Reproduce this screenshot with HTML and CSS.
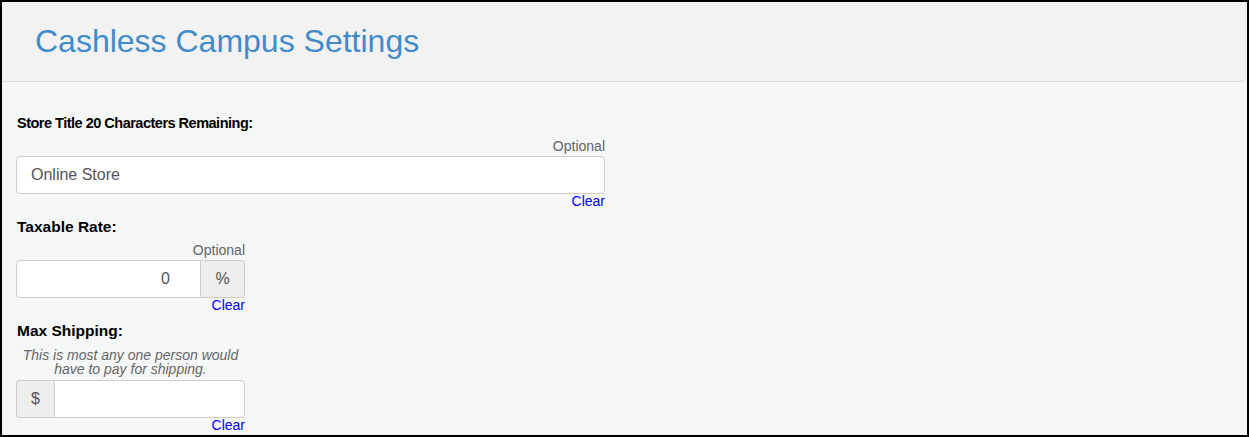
FILE: index.html
```html
<!DOCTYPE html>
<html lang="en">
<head>
<meta charset="UTF-8">
<meta name="viewport" content="width=device-width, initial-scale=1.0">
<title>Cashless Campus Settings</title>
<link rel="stylesheet" href="styles.css">
</head>
<body>

<div class="frame">
    <div class="page-header">
        <h1>Cashless Campus Settings</h1>
    </div>
    <form class="settings" id="settingsForm">
        <div class="form-group wide">
            <label for="storeTitle" class="tight">Store Title 20 Characters Remaining:</label>
            <div class="hint">Optional</div>
            <input type="text" id="storeTitle" name="storeTitle" value="Online Store">
            <a class="clear" href="#">Clear</a>
        </div>
        <div class="form-group narrow">
            <label for="taxRate">Taxable Rate:</label>
            <div class="hint">Optional</div>
            <div class="input-group">
                <input type="text" id="taxRate" name="taxRate" class="num" value="0">
                <span class="addon addon-right">%</span>
            </div>
            <a class="clear" href="#">Clear</a>
        </div>
        <div class="form-group narrow">
            <label for="maxShipping">Max Shipping:</label>
            <div class="help">This is most any one person would have to pay for shipping.</div>
            <div class="input-group">
                <span class="addon addon-left">$</span>
                <input type="text" id="maxShipping" name="maxShipping">
            </div>
            <a class="clear" href="#">Clear</a>
        </div>
    </form>
</div>

</body>
</html>
```

FILE: styles.css
```css
body {
    margin: 0;
    font-family: "Liberation Sans", Arial, sans-serif;
}
.frame {
    height: 437px;
    box-sizing: border-box;
    border: 2px solid #000;
    background-color: #f5f7f6;
    overflow: hidden;
}
.page-header {
    height: 80px;
    box-sizing: border-box;
    margin-right: 1px;
    padding: 19px 0 0 33px;
    background-color: #f2f2f2;
    border-bottom: 1px solid #dcdcdc;
    border-right: 1px solid #e4e4e4;
    border-bottom-right-radius: 4px;
}
.page-header h1 {
    margin: 0;
    font-size: 32px;
    line-height: 40px;
    font-weight: normal;
    color: #428bca;
}
.settings {
    padding: 31px 14px 0;
}
.form-group {
    display: flex;
    flex-direction: column;
    margin-bottom: 9px;
}
.form-group.wide {
    width: 589px;
}
.form-group.narrow {
    width: 229px;
}
.form-group label {
    font-weight: bold;
    font-size: 15.5px;
    line-height: 20px;
    margin: 0 0 6px 1px;
    color: #000;
}
.form-group label.tight {
    font-size: 14.5px;
    letter-spacing: -0.5px;
}
.hint {
    text-align: right;
    font-size: 14px;
    line-height: 14px;
    color: #666;
    margin-bottom: 3px;
}
.help {
    text-align: center;
    font-style: italic;
    font-size: 14px;
    line-height: 14px;
    color: #666;
    margin: 1px 0 4px;
}
.form-group input {
    height: 38px;
    box-sizing: border-box;
    padding: 0 14px;
    border: 1px solid #ccc;
    border-radius: 4px;
    background-color: #fff;
    font-family: inherit;
    font-size: 16px;
    color: #555;
    outline: none;
}
.input-group {
    display: flex;
}
.input-group input {
    flex: 1;
    min-width: 0;
}
.input-group input.num {
    text-align: right;
    padding-right: 30px;
    border-radius: 4px 0 0 4px;
}
.addon {
    display: flex;
    align-items: center;
    justify-content: center;
    height: 38px;
    box-sizing: border-box;
    background-color: #eee;
    border: 1px solid #ccc;
    font-size: 16px;
    color: #555;
}
.addon-right {
    width: 44px;
    border-left: none;
    border-radius: 0 4px 4px 0;
}
.addon-left {
    width: 38px;
    border-right: none;
    border-radius: 4px 0 0 4px;
}
.addon-left + input {
    border-radius: 0 4px 4px 0;
}
.clear {
    align-self: flex-end;
    font-size: 14px;
    line-height: 14px;
    color: #00f;
    text-decoration: none;
}
```
